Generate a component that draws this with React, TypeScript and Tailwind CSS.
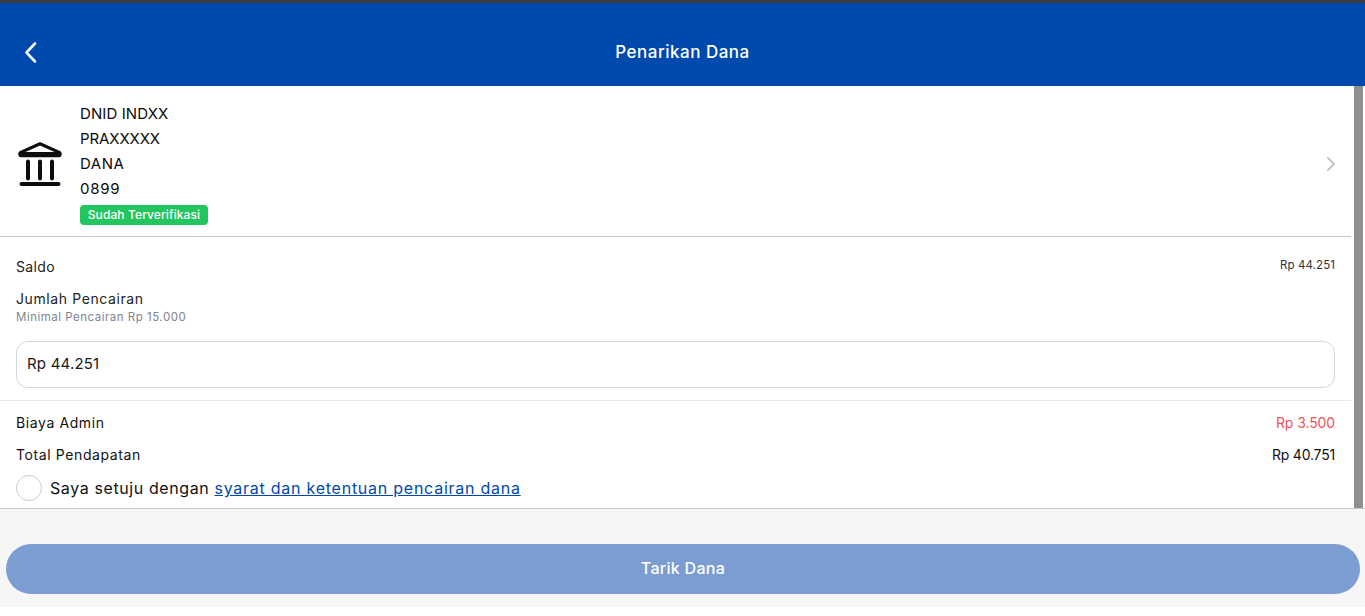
import React from "react";

function Row({ left, right, rightClass, h }: { left: string; right: string; rightClass: string; h: string }) {
  return (
    <div className={`flex items-center justify-between pl-4 pr-4 ${h}`}>
      <span className="text-[14px] leading-5 tracking-[0.6px] text-[#111]">{left}</span>
      <span className={rightClass}>{right}</span>
    </div>
  );
}

export default function App() {
  return (
    <div className="flex h-[616px] w-[1365px] flex-col overflow-hidden bg-white font-['Inter',sans-serif]">
      <div className="h-[3px] bg-[#3b3b40]" />
      <header className="relative flex h-[83px] items-center justify-center bg-[#0049ad] text-white">
        <svg className="absolute left-[24px] top-[37px]" width="14" height="24" viewBox="0 0 14 24" fill="none" stroke="#f4f6fa" strokeWidth="2.6" strokeLinecap="round" strokeLinejoin="round">
          <path d="M11 3.500 2.500 12.500 11 21.500" />
        </svg>
        <h1 className="mt-[15px] text-[17px] font-medium leading-6 tracking-[0.5px]">Penarikan Dana</h1>
      </header>

      <div className="flex h-[422px] bg-white">
        <main className="w-[1351px]">
          <section className="flex h-[151px] items-center border-b border-[#c8c8c8]">
            <div className="flex w-[80px] justify-start pl-[17px]">
              <svg className="mt-[6px]" width="46" height="46" viewBox="0 0 46 46" fill="none">
                <path fillRule="evenodd" fill="#0d0d0d" d="M23 1 43 10C45.500 11.200 45.500 16.300 42 16.300H4C.5 16.300.5 11.200 3 10ZM23 4.500 8.500 11H37.500Z" />
                <path d="M11 20.500v17M23 20.500v17M35 20.500v17M4.500 43h37" stroke="#0d0d0d" strokeWidth="4" strokeLinecap="round" />
              </svg>
            </div>
            <div className="flex flex-1 flex-col items-start pt-[4px] text-[15px] leading-[25px] text-[#0b0b0b]">
              <div className="tracking-[0.1px]">DNID INDXX</div>
              <div className="tracking-[-0.1px]">PRAXXXXX</div>
              <div className="tracking-[0.5px]">DANA</div>
              <div className="tracking-[0.7px]">0899</div>
              <span className="mt-[4px] flex h-[20px] w-[128px] items-center justify-center rounded-[4px] bg-[#22c55e] text-[12px] font-medium leading-4 tracking-[0.1px] text-white">
                Sudah Terverifikasi
              </span>
            </div>
            <svg className="mr-[14px] mt-[6px]" width="12" height="16" viewBox="0 0 12 16" fill="none" stroke="#c4c4c4" strokeWidth="2" strokeLinecap="round" strokeLinejoin="round">
              <path d="M3 2l6 6-6 6" />
            </svg>
          </section>

          <div className="flex h-[46px] justify-between px-4 pt-[20px]">
            <span className="text-[14px] leading-5 tracking-[0.35px] text-[#222]">Saldo</span>
            <span className="text-[11.5px] leading-4 tracking-[0.1px] text-[#333]">Rp 44.251</span>
          </div>
          <div className="px-4 pt-[6px]">
            <div className="text-[14px] leading-5 tracking-[0.6px] text-[#222]">Jumlah Pencairan</div>
            <div className="text-[11.5px] leading-4 tracking-[0.5px] text-[#7d8592]">Minimal Pencairan Rp 15.000</div>
          </div>
          <div className="mx-4 mt-[16px] flex h-[47px] w-[1319px] items-center rounded-[12px] border border-[#d2d5dd] px-[10px] text-[15px] tracking-[0.2px] text-[#1a1a1a]">
            Rp 44.251
          </div>
          <div className="mt-[12px] h-px bg-[#e8e8e8]" />
          <Row left="Biaya Admin" right="Rp 3.500" rightClass="text-[14px] leading-5 tracking-[-0.1px] text-[#f4525c]" h="mt-[12px] h-[20px]" />
          <Row left="Total Pendapatan" right="Rp 40.751" rightClass="text-[14px] leading-5 tracking-[-0.2px] text-[#111]" h="mt-[12px] h-[20px]" />
          <div className="mt-[10px] flex items-center pl-4">
            <span className="h-[26px] w-[26px] rounded-full border border-[#cfcfcf]" />
            <span className="ml-2 text-[16px] leading-6 tracking-[0.6px] text-[#111]">
              Saya setuju dengan <a className="tracking-[0.75px] text-[#0049ad] underline">syarat dan ketentuan pencairan dana</a>
            </span>
          </div>
        </main>
        <div className="ml-[3px] w-[9px] bg-[#8f8f8f]" />
      </div>

      <footer className="h-[99px] border-t border-[#c8c8c8] bg-[#f6f6f6] pt-[35px] pl-[6px]">
        <button className="flex h-[50px] w-[1354px] items-center justify-center rounded-full bg-[#7b9dd2] pb-[2px] text-[16px] font-medium tracking-[0.3px] text-white">
          Tarik Dana
        </button>
      </footer>
    </div>
  );
}
